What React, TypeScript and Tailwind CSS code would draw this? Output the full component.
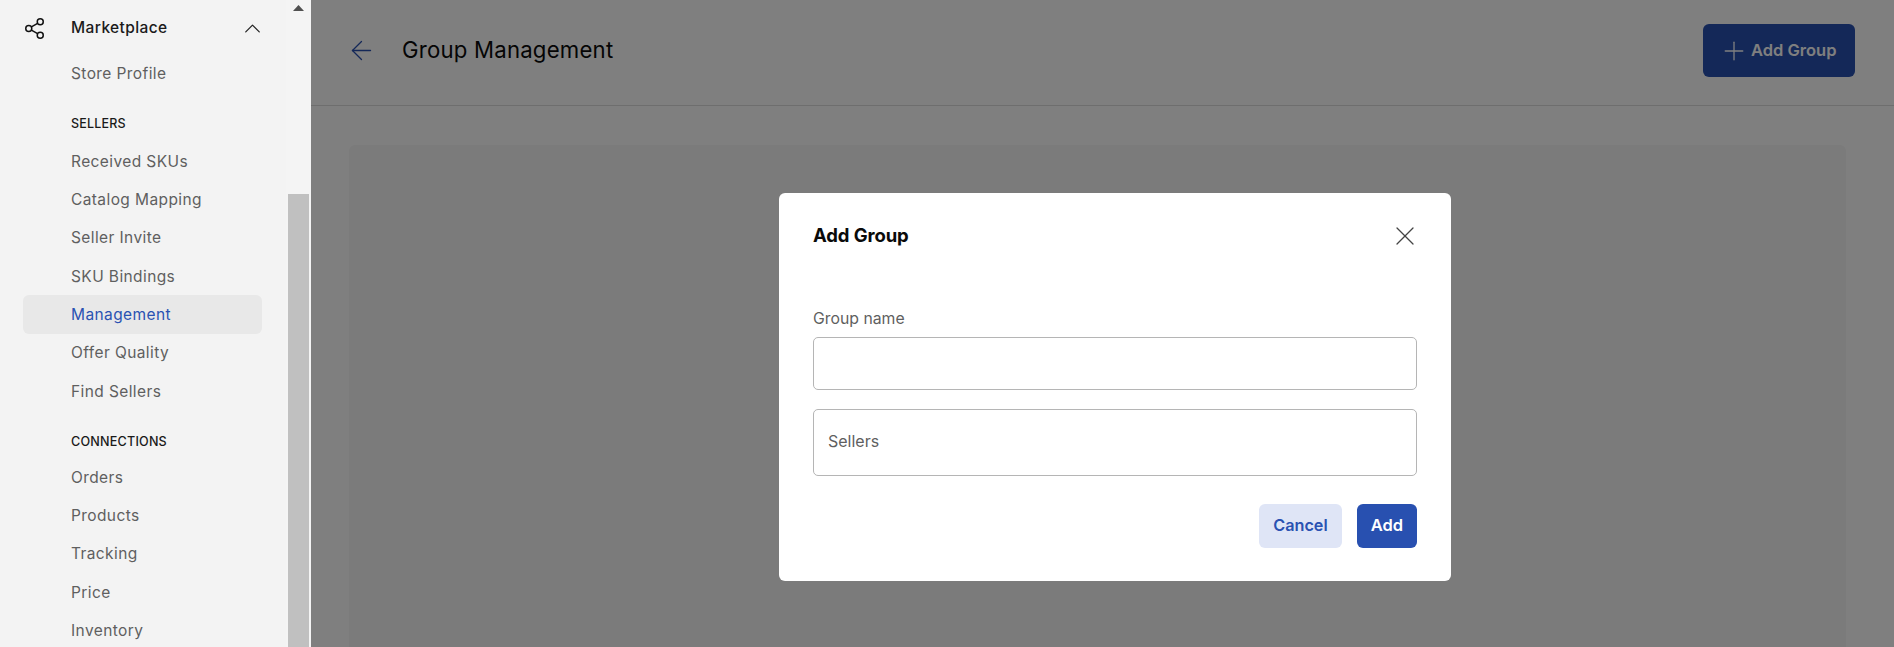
import React from "react";
import { ChevronUp, X, Plus, ArrowLeft } from "lucide-react";

const sellers = ["Received SKUs", "Catalog Mapping", "Seller Invite", "SKU Bindings", "Management", "Offer Quality", "Find Sellers"];
const connections = ["Orders", "Products", "Tracking", "Price", "Inventory"];

function Item({ label }: { label: string }) {
  const active = label === "Management";
  return (
    <div className={active
      ? "h-[38.33px] shrink-0 ml-[23px] mr-[24px] pl-[48px] flex items-center rounded-[6px] bg-[#e8e8e8] text-[#2a52b2] text-[15.5px] tracking-[0.4px]"
      : "h-[38.33px] shrink-0 ml-[23px] mr-[24px] pl-[48px] flex items-center text-[#5f5f5f] text-[15.5px] tracking-[0.4px]"}>
      {label}
    </div>
  );
}

function ShareIcon() {
  return (
    <svg width="19" height="21" viewBox="0 0 19 21" fill="none" stroke="#111" strokeWidth="1.5">
      <circle cx="15.25" cy="3.75" r="3" />
      <circle cx="3.75" cy="10.5" r="3" />
      <circle cx="15.25" cy="17.25" r="3" />
      <path d="M6.4 8.9 12.6 5.3M6.4 12.1l6.2 3.6" />
    </svg>
  );
}

export default function App() {
  return (
    <div className="relative w-[1894px] h-[647px] overflow-hidden flex bg-white font-['Inter','Liberation_Sans',sans-serif]">
      <aside className="w-[311px] shrink-0 flex bg-white">
        <nav className="w-[286px] shrink-0 bg-[#f3f3f3] flex flex-col overflow-hidden">
          <div className="h-[56px] shrink-0 flex items-center pl-[25px] pr-[20px]">
            <ShareIcon />
            <span className="ml-[27px] text-[15.5px] font-medium tracking-[0.4px] text-[#1a1a1a]">Marketplace</span>
            <ChevronUp className="ml-auto text-[#222]" size={27} strokeWidth={1.1} />
          </div>
          <div className="h-[36px] shrink-0 pl-[71px] flex items-center text-[15.5px] tracking-[0.4px] text-[#5f5f5f]">Store Profile</div>
          <div className="h-[50px] shrink-0 pl-[71px] pt-[14px] flex items-center text-[12.5px] font-medium tracking-[0.2px] text-[#1a1a1a]">SELLERS</div>
          {sellers.map((s) => <Item key={s} label={s} />)}
          <div className="h-[48px] shrink-0 pl-[71px] pt-[17px] flex items-center text-[12.6px] font-medium tracking-[0.2px] text-[#1a1a1a]">CONNECTIONS</div>
          {connections.map((s) => <Item key={s} label={s} />)}
        </nav>
        <div className="w-[25px] shrink-0 bg-[#f4f4f4] flex flex-col pl-[2px] pr-[2px]">
          <svg className="mt-[5px] ml-[5px] shrink-0" width="11" height="6" viewBox="0 0 11 6"><path d="M5.5 0 11 6H0z" fill="#505050" /></svg>
          <div className="mt-[183px] flex-1 bg-[#c0c0c0]" />
        </div>
      </aside>

      <main className="flex-1 flex flex-col min-w-0">
        <header className="h-[106px] shrink-0 border-b border-[#dcdcdc] flex items-center pl-[35px] pr-[39px] pb-[4px]">
          <ArrowLeft className="text-[#2850b0]" size={31} strokeWidth={1} />
          <h1 className="ml-[25px] mb-[2px] text-[22.2px] font-normal tracking-[0.2px] text-[#0b0b0b]">Group Management</h1>
          <button className="ml-auto w-[152px] h-[53px] rounded-[6px] bg-[#2850b0] flex items-center pl-[16px] text-white text-[16.5px] font-semibold">
            <Plus size={30} strokeWidth={1.05} />
            <span className="ml-[2px]">Add Group</span>
          </button>
        </header>
        <section className="flex-1 mt-[39px] ml-[38px] mr-[48px] rounded-t-[6px] bg-[#f6f6f6]" />
      </main>

      <div className="absolute inset-y-0 left-[311px] right-0 bg-black/50 pl-[468px] pt-[193px]">
        <div className="w-[672px] h-[388px] bg-white rounded-[6px] px-[34px] flex flex-col">
          <div className="h-[86px] shrink-0 flex items-center justify-between">
            <h2 className="text-[18.5px] font-bold text-[#0a0a0a] tracking-[-0.1px]">Add Group</h2>
            <X className="-mr-[4px] text-[#444]" size={32} strokeWidth={0.95} />
          </div>
          <label className="mt-[29px] h-[29px] shrink-0 text-[15.8px] text-[#5f5f5f] leading-[22px]">Group name</label>
          <div className="h-[53px] shrink-0 border border-[#b5b5b5] rounded-[5px]" />
          <div className="mt-[19px] h-[67px] shrink-0 border border-[#b5b5b5] rounded-[5px] flex items-center pl-[14px] pb-[4px] text-[16px] text-[#5f5f5f]">Sellers</div>
          <div className="mt-[28px] flex justify-end gap-[15px]">
            <button className="w-[83px] h-[44px] rounded-[6px] bg-[#dfe5f6] pb-[1px] text-[#2a52b2] text-[16.2px] font-semibold">Cancel</button>
            <button className="w-[60px] h-[44px] rounded-[6px] bg-[#2850b0] pb-[2px] text-white text-[16.5px] font-semibold">Add</button>
          </div>
        </div>
      </div>
    </div>
  );
}
